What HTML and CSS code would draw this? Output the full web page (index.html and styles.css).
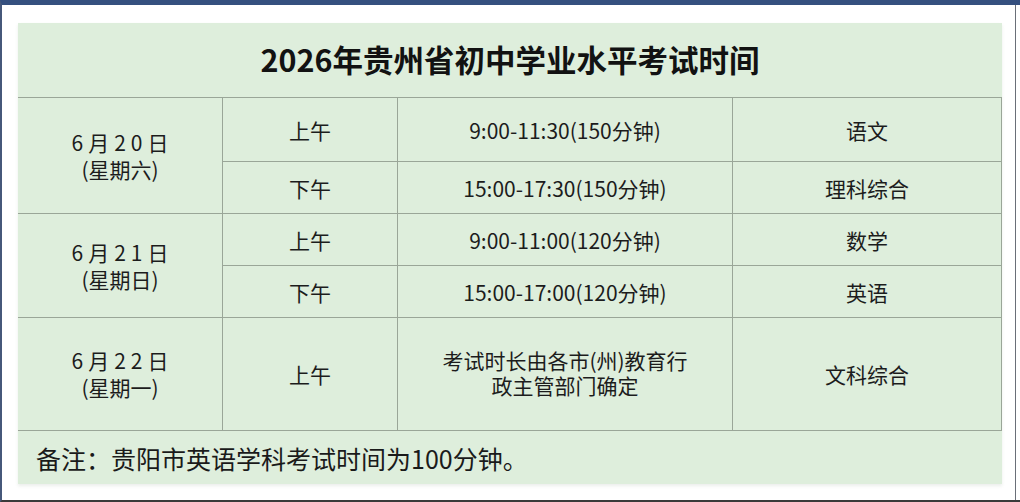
FILE: index.html
```html
<!DOCTYPE html>
<html lang="zh-CN">
<head>
<meta charset="utf-8">
<title>2026年贵州省初中学业水平考试时间</title>
<link rel="stylesheet" href="styles.css">
</head>
<body>
<div class="frame">
  <div class="panel">
    <div class="title">2026年贵州省初中学业水平考试时间</div>
    <div class="grid">
      <div class="cell date r1"><p class="lines"><span class="d">6月20日</span><br>(星期六)</p></div>
      <div class="cell">上午</div>
      <div class="cell">9:00-11:30(150分钟)</div>
      <div class="cell">语文</div>

      <div class="cell">下午</div>
      <div class="cell">15:00-17:30(150分钟)</div>
      <div class="cell">理科综合</div>

      <div class="cell date r3"><p class="lines"><span class="d">6月21日</span><br>(星期日)</p></div>
      <div class="cell">上午</div>
      <div class="cell">9:00-11:00(120分钟)</div>
      <div class="cell">数学</div>

      <div class="cell">下午</div>
      <div class="cell">15:00-17:00(120分钟)</div>
      <div class="cell">英语</div>

      <div class="cell date"><p class="lines"><span class="d">6月22日</span><br>(星期一)</p></div>
      <div class="cell">上午</div>
      <div class="cell multi"><p class="lines">考试时长由各市(州)教育行<br>政主管部门确定</p></div>
      <div class="cell">文科综合</div>
    </div>
    <div class="note">备注：贵阳市英语学科考试时间为100分钟。</div>
  </div>
</div>
</body>
</html>
```
FILE: styles.css
```css
html, body {
  margin: 0;
  padding: 0;
  background: #ffffff;
}

.frame {
  box-sizing: border-box;
  width: 1020px;
  height: 502px;
  border-top: 5px solid #35507f;
  border-left: 2px solid #46587a;
  border-bottom: 2px solid #3a3a3a;
  padding: 18px 0 0 16px;
  background: #ffffff;
  position: relative;
}

.frame::after {
  content: "";
  position: absolute;
  top: 0;
  bottom: 0;
  left: 1013px;
  width: 1px;
  background: #6a6f78;
}

.panel {
  width: 984px;
  background: #deeedc;
  font-family: "Noto Sans CJK SC", "Noto Sans", sans-serif;
  color: #1c1c1c;
  box-shadow: 0 2px 3px rgba(120, 140, 120, 0.15);
}

.title {
  box-sizing: border-box;
  height: 75px;
  border-bottom: 1px solid #9aa698;
  display: flex;
  align-items: center;
  justify-content: center;
  font-size: 30.5px;
  font-weight: 700;
  color: #121212;
  padding-bottom: 2px;
}

.grid {
  display: grid;
  grid-template-columns: 205px 175px 335px 269px;
  grid-template-rows: 64px 52px 52px 52px 113px;
}

.cell {
  box-sizing: border-box;
  border-right: 1px solid #9aa698;
  border-bottom: 1px solid #9aa698;
  display: flex;
  flex-direction: column;
  align-items: center;
  justify-content: center;
  font-size: 21px;
  line-height: 26px;
  text-align: center;
}

.lines {
  margin: 0;
}

.date {
  line-height: 27px;
}

.date.r1,
.date.r3 {
  grid-row: span 2;
}

.date .d {
  letter-spacing: 5px;
  padding-left: 5px;
}

.multi {
  line-height: 25px;
  padding-bottom: 2px;
}

.note {
  box-sizing: border-box;
  height: 53px;
  display: flex;
  align-items: center;
  padding-left: 18px;
  font-size: 25px;
  color: #1a1a1a;
}
```
